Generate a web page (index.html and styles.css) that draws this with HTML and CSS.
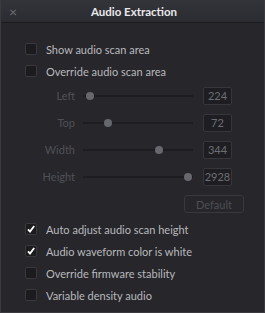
FILE: index.html
```html
<!DOCTYPE html>
<html lang="en">
<head>
    <meta charset="UTF-8">
    <title>Audio Extraction</title>
    <link rel="stylesheet" href="styles.css">
</head>
<body>
    <div class="window">
        <div class="titlebar">
            <span class="close">&times;</span>
            <h1>Audio Extraction</h1>
        </div>
        <div class="content">
            <div class="check-row">
                <span class="box"></span>
                <span class="label">Show audio scan area</span>
            </div>
            <div class="check-row">
                <span class="box"></span>
                <span class="label">Override audio scan area</span>
            </div>

            <div class="slider-row">
                <span class="slider-label">Left</span>
                <div class="track"><span class="thumb" style="left: 7px"></span></div>
                <span class="value">224</span>
            </div>
            <div class="slider-row">
                <span class="slider-label">Top</span>
                <div class="track"><span class="thumb" style="left: 25px"></span></div>
                <span class="value">72</span>
            </div>
            <div class="slider-row">
                <span class="slider-label">Width</span>
                <div class="track"><span class="thumb" style="left: 76px"></span></div>
                <span class="value">344</span>
            </div>
            <div class="slider-row">
                <span class="slider-label">Height</span>
                <div class="track"><span class="thumb" style="left: 105px"></span></div>
                <span class="value">2928</span>
            </div>
            <div class="buttons">
                <button>Default</button>
            </div>

            <div class="check-row">
                <span class="box checked">
                    <svg viewBox="0 0 12 12" width="12" height="12"><path d="M3 6.3 L5 8.5 L9.2 3" fill="none" stroke="#fff" stroke-width="1.8"/></svg>
                </span>
                <span class="label">Auto adjust audio scan height</span>
            </div>
            <div class="check-row">
                <span class="box checked">
                    <svg viewBox="0 0 12 12" width="12" height="12"><path d="M3 6.3 L5 8.5 L9.2 3" fill="none" stroke="#fff" stroke-width="1.8"/></svg>
                </span>
                <span class="label">Audio waveform color is white</span>
            </div>
            <div class="check-row">
                <span class="box"></span>
                <span class="label">Override firmware stability</span>
            </div>
            <div class="check-row">
                <span class="box"></span>
                <span class="label">Variable density audio</span>
            </div>
        </div>
    </div>
</body>
</html>
```

FILE: styles.css
```css
body {
    margin: 0;
    padding: 0;
    background-color: #202024;
    font-family: Lato, 'Open Sans', sans-serif;
}
.window {
    width: 265px;
    height: 313px;
    box-sizing: border-box;
    background-color: #26262b;
    border-left: 1px solid #3a3a3f;
    border-right: 1px solid #3a3a3f;
    border-bottom: 1px solid #3a3a3f;
}
.titlebar {
    position: relative;
    height: 22px;
    padding-left: 3px;
    background: linear-gradient(#33343a, #2b2c31);
    border-bottom: 1px solid #1b1b1e;
    display: flex;
    align-items: center;
    justify-content: center;
}
.titlebar h1 {
    margin: 0;
    font-size: 11.5px;
    font-weight: bold;
    color: #e8e8ea;
}
.close {
    position: absolute;
    left: 8px;
    top: 3px;
    font-size: 14px;
    color: #6c6d72;
}
.content {
    padding-top: 15px;
    padding-left: 24px;
}
.check-row {
    height: 22px;
    display: flex;
    align-items: center;
}
.box {
    width: 10px;
    height: 10px;
    border: 1px solid #38383d;
    border-radius: 2px;
    background-color: #1c1c1f;
    margin-right: 9px;
    display: flex;
    align-items: center;
    justify-content: center;
}
.box svg {
    flex: none;
}
.label {
    font-size: 11px;
    color: #b9b9bd;
}
.slider-row {
    height: 27px;
    display: flex;
    align-items: center;
}
.slider-label {
    width: 50px;
    text-align: right;
    font-size: 11px;
    color: #505156;
}
.track {
    position: relative;
    width: 110px;
    height: 2px;
    margin-left: 8px;
    background-color: #1d1d21;
}
.thumb {
    position: absolute;
    top: -3px;
    width: 8px;
    height: 8px;
    margin-left: -4px;
    border-radius: 50%;
    background-color: #67686d;
}
.value {
    width: 27px;
    height: 16px;
    margin-left: 10px;
    border: 1px solid #36363b;
    border-radius: 2px;
    background-color: #1e1e22;
    color: #6d6e73;
    font-size: 11px;
    line-height: 16px;
    text-align: center;
}
.buttons {
    display: flex;
    padding-left: 159px;
    margin-top: 5px;
    margin-bottom: 5px;
}
.buttons button {
    width: 60px;
    height: 18px;
    padding: 0;
    border: 1px solid #38383d;
    border-radius: 3px;
    background-color: #26262b;
    color: #4e4f54;
    font-family: Lato, 'Open Sans', sans-serif;
    font-size: 11px;
}
```
